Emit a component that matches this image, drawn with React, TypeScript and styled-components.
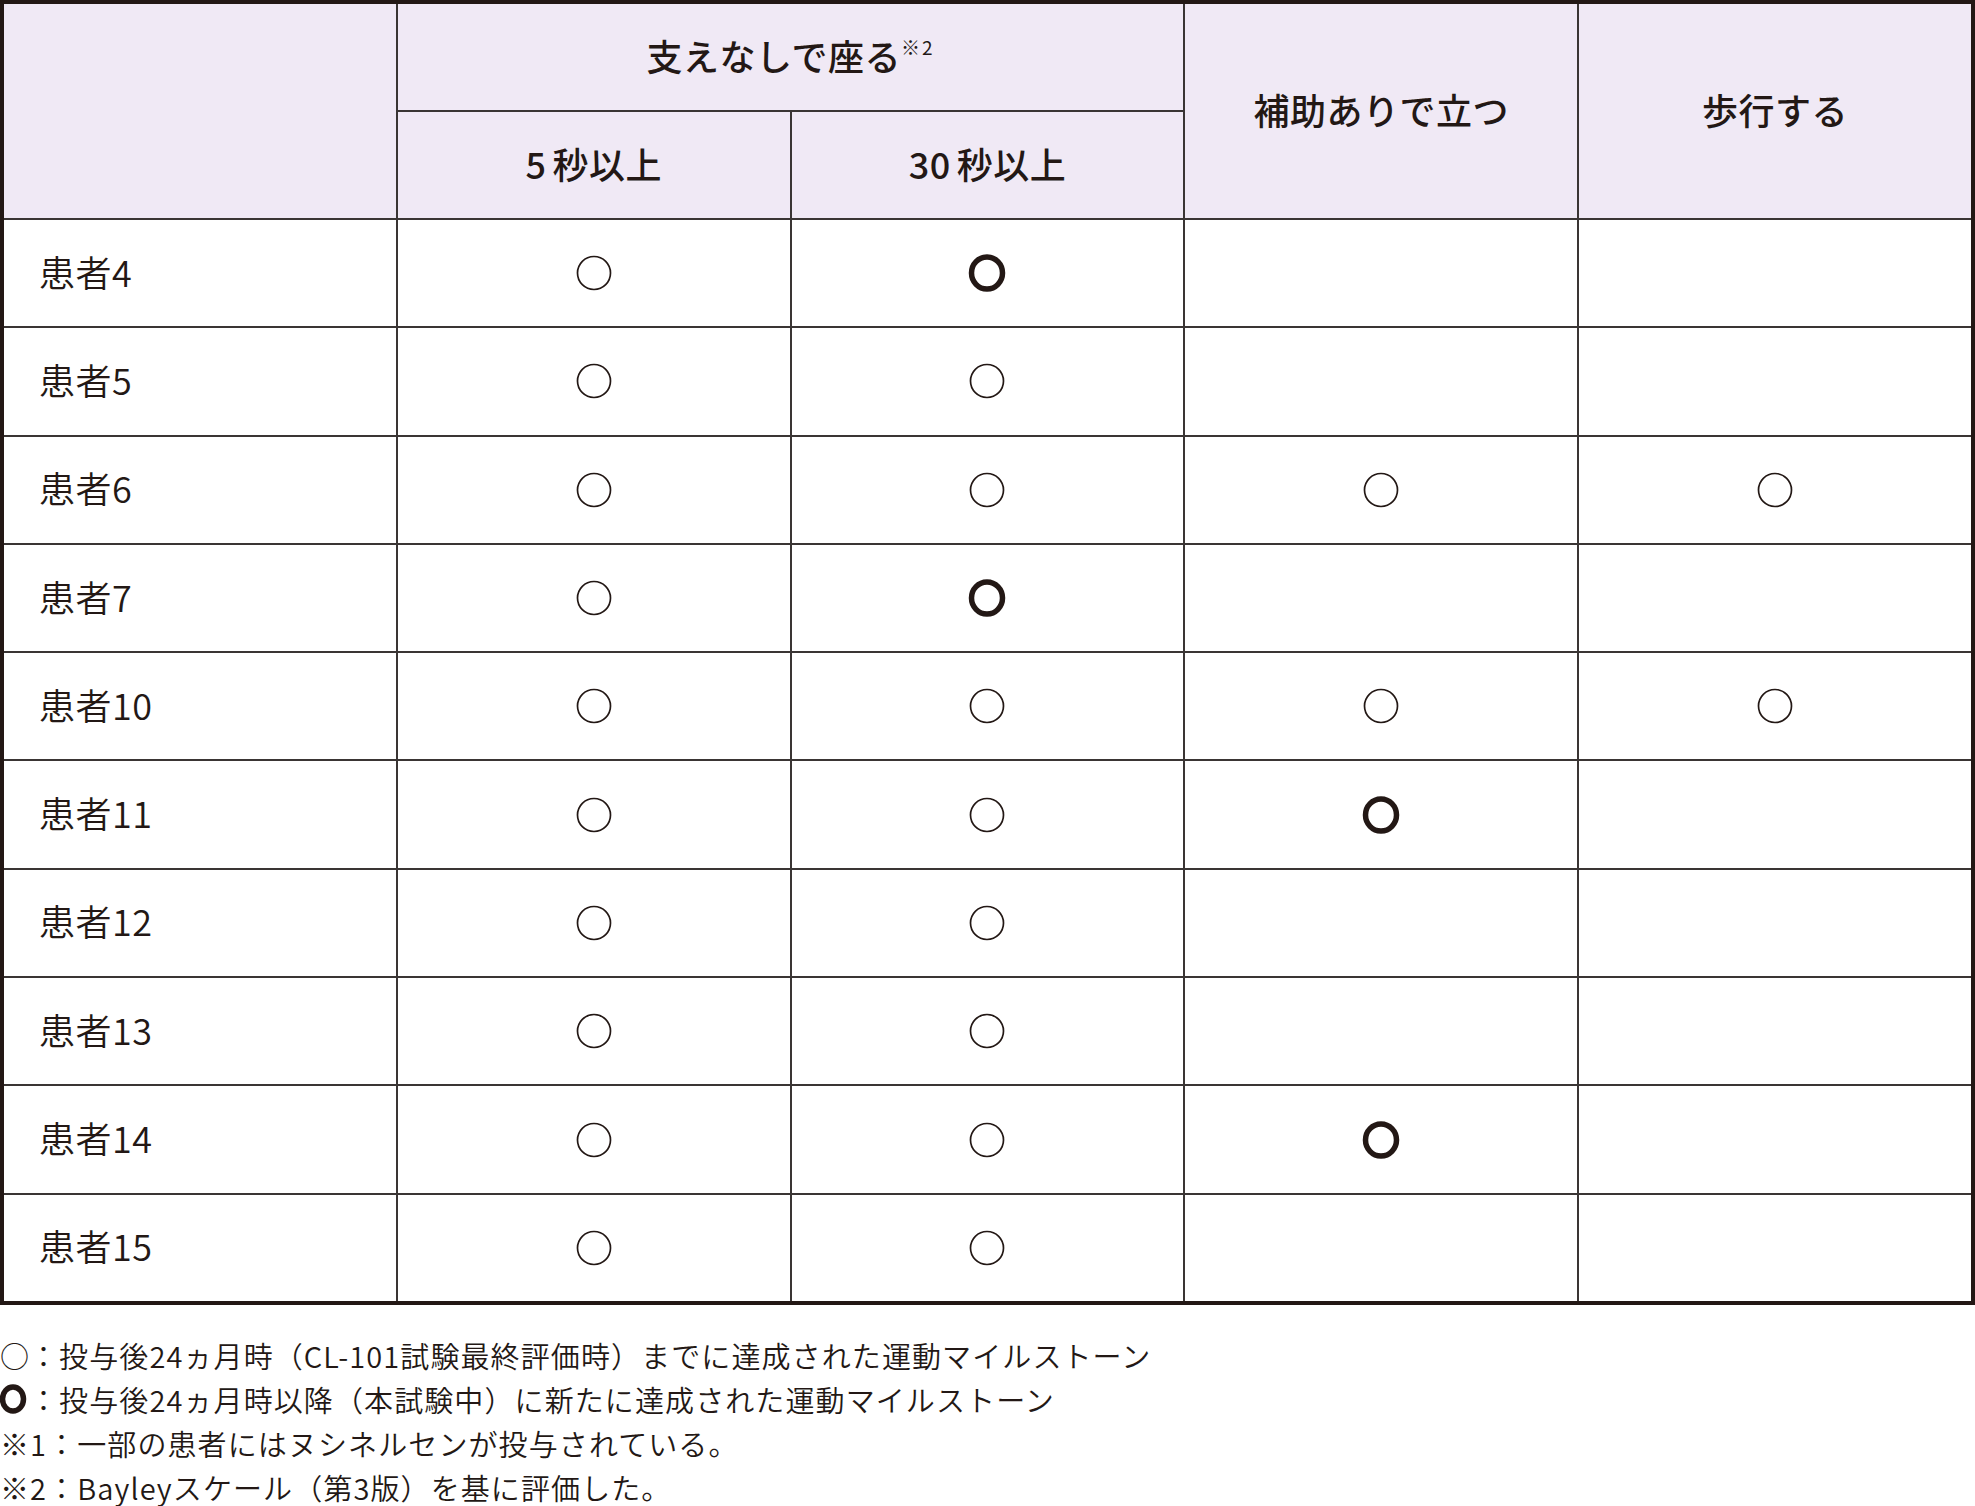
import React from "react";
import styled, { createGlobalStyle } from "styled-components";

const Global = createGlobalStyle`
  html, body { margin: 0; padding: 0; background: #ffffff; }
  body {
    font-family: "Noto Sans CJK JP", "Noto Sans", sans-serif;
    color: #231815;
  }
`;

const Page = styled.div`
  width: 1975px;
`;

const Grid = styled.div`
  display: grid;
  grid-template-columns: repeat(5, 1fr);
  grid-template-rows: 106px 106px repeat(10, 106.3px);
  gap: 2px;
  background: #3a3534;
  border: 4px solid #231815;
  box-sizing: border-box;
  width: 1975px;
`;

const HeadCell = styled.div<{ $col: string; $row: string }>`
  grid-column: ${(p) => p.$col};
  grid-row: ${(p) => p.$row};
  background: #f0e9f5;
  display: flex;
  align-items: center;
  justify-content: center;
  padding-bottom: 5px;
  box-sizing: border-box;
  font-size: 36px;
  font-weight: 500;
  letter-spacing: 0.5px;
  color: #231815;
`;

const Num = styled.span`
  margin-right: 6px;
`;

const Sup = styled.sup`
  font-size: 19px;
  font-weight: 400;
  vertical-align: top;
  position: relative;
  top: -8px;
  letter-spacing: 2px;
`;

const NameCell = styled.div`
  background: #ffffff;
  display: flex;
  align-items: center;
  padding-left: 35px;
  padding-bottom: 5px;
  box-sizing: border-box;
  font-size: 36px;
  font-weight: 350;
  letter-spacing: 0.5px;
`;

const MarkCell = styled.div`
  background: #ffffff;
  display: flex;
  align-items: center;
  justify-content: center;
`;

const Legend = styled.div`
  margin-top: 28px;
  font-size: 29px;
  font-weight: 350;
  line-height: 44px;
  letter-spacing: 1.1px;
  color: #231815;
`;

const LegendLine = styled.div`
  display: flex;
  align-items: center;
  white-space: nowrap;
`;

const LegendMark = styled.span`
  display: inline-flex;
  width: 29px;
  justify-content: flex-start;
`;

type Mark = "t" | "b" | "";

const Circle: React.FC<{ kind: Mark }> = ({ kind }) => {
  if (kind === "t") {
    return (
      <svg width="36" height="36" viewBox="0 0 36 36">
        <ellipse cx="18" cy="18" rx="16.5" ry="16.5" fill="none" stroke="#231815" strokeWidth="1.7" />
      </svg>
    );
  }
  if (kind === "b") {
    return (
      <svg width="40" height="40" viewBox="0 0 40 40">
        <ellipse cx="20" cy="20" rx="15.5" ry="16" fill="none" stroke="#231815" strokeWidth="5.5" />
      </svg>
    );
  }
  return null;
};

const rows: { name: string; marks: Mark[] }[] = [
  { name: "患者4", marks: ["t", "b", "", ""] },
  { name: "患者5", marks: ["t", "t", "", ""] },
  { name: "患者6", marks: ["t", "t", "t", "t"] },
  { name: "患者7", marks: ["t", "b", "", ""] },
  { name: "患者10", marks: ["t", "t", "t", "t"] },
  { name: "患者11", marks: ["t", "t", "b", ""] },
  { name: "患者12", marks: ["t", "t", "", ""] },
  { name: "患者13", marks: ["t", "t", "", ""] },
  { name: "患者14", marks: ["t", "t", "b", ""] },
  { name: "患者15", marks: ["t", "t", "", ""] },
];

export default function App() {
  return (
    <Page>
      <Global />
      <Grid>
        <HeadCell $col="1" $row="1 / span 2" />
        <HeadCell $col="2 / span 2" $row="1">
          支えなしで座る<Sup>※2</Sup>
        </HeadCell>
        <HeadCell $col="4" $row="1 / span 2">補助ありで立つ</HeadCell>
        <HeadCell $col="5" $row="1 / span 2">歩行する</HeadCell>
        <HeadCell $col="2" $row="2">
          <Num>5</Num>秒以上
        </HeadCell>
        <HeadCell $col="3" $row="2">
          <Num>30</Num>秒以上
        </HeadCell>
        {rows.map((r) => (
          <React.Fragment key={r.name}>
            <NameCell>{r.name}</NameCell>
            {r.marks.map((m, i) => (
              <MarkCell key={i}>
                <Circle kind={m} />
              </MarkCell>
            ))}
          </React.Fragment>
        ))}
      </Grid>
      <Legend>
        <LegendLine>
          <LegendMark>○</LegendMark>：投与後24ヵ月時（CL-101試験最終評価時）までに達成された運動マイルストーン
        </LegendLine>
        <LegendLine>
          <LegendMark>
            <svg width="28" height="32" viewBox="0 0 28 32">
              <ellipse cx="13" cy="16" rx="10.5" ry="12" fill="none" stroke="#231815" strokeWidth="5.5" />
            </svg>
          </LegendMark>
          ：投与後24ヵ月時以降（本試験中）に新たに達成された運動マイルストーン
        </LegendLine>
        <LegendLine>※1：一部の患者にはヌシネルセンが投与されている。</LegendLine>
        <LegendLine>※2：Bayleyスケール（第3版）を基に評価した。</LegendLine>
      </Legend>
    </Page>
  );
}
